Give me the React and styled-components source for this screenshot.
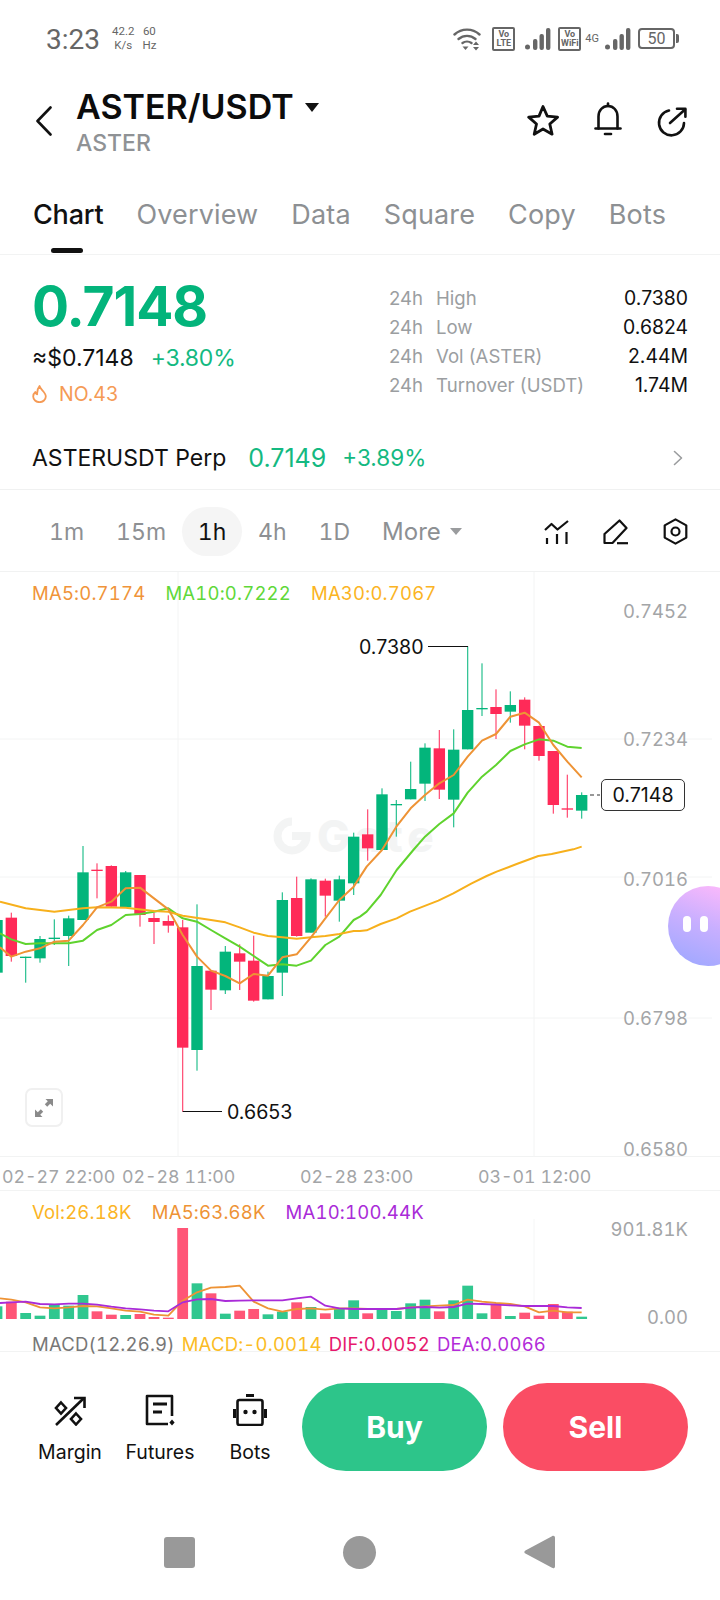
import styled, { createGlobalStyle } from "styled-components";

const GlobalStyle = createGlobalStyle`
  html, body { margin: 0; padding: 0; background: #fff; }
  body { font-family: Inter, "Liberation Sans", sans-serif; }
  * { box-sizing: border-box; }
`;

const Page = styled.div`
  position: relative;
  width: 720px;
  height: 1600px;
  overflow: hidden;
  background: #fff;
  display: flex;
  flex-direction: column;
`;

/* status bar */
const StatusBar = styled.div`
  height: 76px;
  padding: 26px 45px 0 46px;
  display: flex;
  align-items: flex-start;
  color: #666;
  font-family: Roboto, sans-serif;
`;
const Clock = styled.div`
  font-size: 28px;
  line-height: 28px;
  width: 66px;
`;
const NetStat = styled.div`
  font-size: 11.5px;
  line-height: 14px;
  text-align: center;
  margin-right: 8px;
  margin-top: -2px;
`;
const StatusRight = styled.div`
  margin-left: auto;
  display: flex;
  align-items: center;
  height: 25px;
`;
const VoBox = styled.div`
  width: 23px;
  height: 24px;
  border: 2px solid #666;
  border-radius: 2px;
  font-size: 9px;
  line-height: 9px;
  font-weight: 700;
  text-align: center;
  padding-top: 1px;
  margin: ${(p) => p.$margin};
`;
const FourG = styled.span`
  font-size: 11px;
  margin: 0 6px 0 4px;
`;
const Battery = styled.div`
  width: 37px;
  height: 21px;
  margin-left: 7px;
  border: 2px solid #666;
  border-radius: 4px;
  font-size: 16px;
  line-height: 17px;
  text-align: center;
  position: relative;
  &::after {
    content: "";
    position: absolute;
    right: -6px;
    top: 4px;
    width: 3px;
    height: 9px;
    background: #666;
    border-radius: 0 2px 2px 0;
  }
`;

/* pair header */
const Header = styled.div`
  height: 114px;
  padding: 16px 33px 0 36px;
  display: flex;
  align-items: flex-start;
`;
const BackWrap = styled.div`
  width: 40px;
  padding-top: 14px;
  display: flex;
`;
const PairCol = styled.div`
  display: flex;
  flex-direction: column;
`;
const PairRow = styled.div`
  display: flex;
  align-items: center;
  gap: 11px;
`;
const PairName = styled.div`
  font-size: 34px;
  line-height: 30px;
  font-weight: 600;
  color: #0c0c0c;
`;
const Caret = styled.div`
  width: 0;
  height: 0;
  border-left: ${(p) => p.$size}px solid transparent;
  border-right: ${(p) => p.$size}px solid transparent;
  border-top: ${(p) => p.$size * 1.3}px solid ${(p) => p.$color};
`;
const BaseName = styled.div`
  font-size: 23px;
  line-height: 26px;
  font-weight: 500;
  color: #8f9295;
  margin-top: 8px;
`;
const HeaderIcons = styled.div`
  margin-left: auto;
  display: flex;
  gap: 34px;
  padding-top: 12px;
`;

/* tabs */
const Tabs = styled.div`
  height: 65px;
  padding: 5px 0 0 33px;
  display: flex;
  gap: 33px;
  border-bottom: 1px solid #f2f3f3;
`;
const Tab = styled.div`
  position: relative;
  font-size: 27px;
  line-height: 40px;
  letter-spacing: ${(p) => (p.$active ? "-0.2px" : "0.15px")};
  color: ${(p) => (p.$active ? "#111" : "#8d9093")};
  font-weight: ${(p) => (p.$active ? 500 : 400)};
  &::after {
    content: "";
    display: ${(p) => (p.$active ? "block" : "none")};
    position: absolute;
    left: 18px;
    top: 53px;
    width: 32px;
    height: 5px;
    border-radius: 3px;
    background: #111;
  }
`;

/* price summary */
const Summary = styled.div`
  height: 171px;
  padding: 22px 32px 0 32px;
  display: flex;
  justify-content: space-between;
`;
const PriceCol = styled.div`
  display: flex;
  flex-direction: column;
`;
const BigPrice = styled.div`
  font-size: 55px;
  line-height: 58px;
  font-weight: 700;
  letter-spacing: -1px;
  color: #03b47b;
`;
const FiatRow = styled.div`
  margin-top: 9px;
  display: flex;
  gap: 17px;
  font-size: 23px;
  line-height: 28px;
  color: #111;
`;
const Up = styled.span`
  color: #14b981;
  letter-spacing: -0.2px;
`;
const RankRow = styled.div`
  margin-top: 10px;
  display: flex;
  align-items: center;
  gap: 12px;
  font-size: 19.5px;
  line-height: 24px;
  color: #f59a55;
`;
const StatsCol = styled.div`
  width: 299px;
  padding-top: 9px;
  display: flex;
  flex-direction: column;
  gap: 5px;
`;
const StatRow = styled.div`
  display: flex;
  font-size: 18.6px;
  line-height: 24px;
  color: #9b9ea1;
`;
const StatPeriod = styled.span`
  width: 47px;
`;
const StatValue = styled.span`
  margin-left: auto;
  font-size: 19.4px;
  color: #111;
`;

const PerpRow = styled.div`
  height: 64px;
  padding: 0 37px 0 32px;
  display: flex;
  align-items: center;
  font-size: 23px;
  color: #111;
  border-bottom: 1px solid #f0f1f1;
`;
const PerpPrice = styled.span`
  margin-left: 22px;
  font-size: 25px;
  color: #14b981;
`;
const PerpChange = styled.span`
  margin-left: 16px;
  font-size: 22.5px;
  color: #14b981;
`;
const PushRight = styled.div`
  margin-left: auto;
  display: flex;
`;

/* period toolbar */
const Periods = styled.div`
  height: 82px;
  padding: 2px 32px 0 33px;
  display: flex;
  align-items: center;
  border-bottom: 1px solid #f1f2f2;
`;
const Period = styled.div`
  height: 49px;
  min-width: ${(p) => (p.$active ? "60px" : "auto")};
  padding: 0 ${(p) => (p.$active ? "0" : "16px")};
  border-radius: 25px;
  background: ${(p) => (p.$active ? "#f5f5f5" : "transparent")};
  color: ${(p) => (p.$active ? "#111" : "#8d9093")};
  font-size: 23px;
  font-variant-numeric: tabular-nums;
  display: flex;
  align-items: center;
  justify-content: center;
  gap: 9px;
`;
const MorePeriod = styled(Period)`
  font-size: 24px;
`;
const ToolIcons = styled.div`
  margin-left: auto;
  display: flex;
  gap: 34px;
  align-items: center;
`;

/* chart */
const ChartArea = styled.div`
  position: relative;
  height: 585px;
  border-bottom: 1px solid #f2f3f3;
`;
const Legend = styled.div`
  position: relative;
  z-index: 1;
  padding-left: 32px;
  display: flex;
  gap: 20px;
  font-size: 18.5px;
  line-height: 22px;
  letter-spacing: 0.2px;
  font-variant-numeric: tabular-nums;
  padding-top: ${(p) => p.$top}px;
`;
const LegendItem = styled.span`
  color: ${(p) => p.$color};
`;
const Canvas = styled.svg`
  position: absolute;
  left: 0;
  top: 0;
  display: block;
`;
const AxisLabel = styled.div`
  position: absolute;
  right: 32px;
  top: ${(p) => p.$top}px;
  font-size: 18.5px;
  line-height: 22px;
  color: #a3a5a7;
  font-variant-numeric: tabular-nums;
`;
const PriceNote = styled.div`
  position: absolute;
  left: ${(p) => p.$left}px;
  top: ${(p) => p.$top}px;
  font-size: 19.6px;
  line-height: 22px;
  color: #111;
`;
const LastTag = styled.div`
  position: absolute;
  left: 601px;
  top: 207px;
  width: 84px;
  height: 32px;
  border: 1px solid #333;
  border-radius: 5px;
  background: #fff;
  font-size: 19.6px;
  line-height: 30px;
  text-align: center;
  color: #111;
`;
const Watermark = styled.div`
  position: absolute;
  left: 273px;
  top: 242px;
  display: flex;
  align-items: center;
  gap: 6px;
  font-size: 44px;
  line-height: 44px;
  font-weight: 800;
  letter-spacing: 5px;
  color: #f3f4f4;
`;
const ExpandButton = styled.div`
  position: absolute;
  left: 25px;
  top: 516px;
  width: 38px;
  height: 39px;
  border: 2px solid #f0f0f0;
  border-radius: 7px;
  display: flex;
  align-items: center;
  justify-content: center;
`;
const AiBubble = styled.div`
  position: absolute;
  left: 668px;
  top: 314px;
  width: 80px;
  height: 80px;
  border-radius: 50%;
  background: linear-gradient(200deg, #fcb9fb 8%, #c8afff 50%, #a5a9ff 88%);
  z-index: 2;
  display: flex;
  gap: 9px;
  padding: 30px 0 0 15px;
`;
const Eye = styled.div`
  width: 8px;
  height: 16px;
  border-radius: 4px;
  background: #fff;
`;

const TimeAxis = styled.div`
  position: relative;
  height: 34px;
  border-bottom: 1px solid #f2f3f3;
`;
const TimeLabel = styled.div`
  position: absolute;
  left: ${(p) => p.$left}px;
  top: 9px;
  font-size: 17.8px;
  line-height: 22px;
  color: #a3a5a7;
  white-space: nowrap;
  font-variant-numeric: tabular-nums;
`;

const VolumePane = styled.div`
  position: relative;
  height: 161px;
  border-bottom: 1px solid #f2f3f3;
`;
const MacdLegend = styled.div`
  position: absolute;
  left: 32px;
  top: 144px;
  display: flex;
  gap: 7px;
  font-size: 18.5px;
  line-height: 18px;
  letter-spacing: 0.2px;
  font-variant-numeric: tabular-nums;
`;

/* bottom actions */
const ActionBar = styled.div`
  height: 120px;
  padding: 31px 32px 0 25px;
  display: flex;
  align-items: flex-start;
`;
const QuickLinks = styled.div`
  width: 277px;
  padding: 11px 7px 0 0;
  display: grid;
  grid-template-columns: repeat(3, 90px);
`;
const QuickLink = styled.div`
  display: flex;
  flex-direction: column;
  align-items: center;
  gap: 14px;
  font-size: 19.5px;
  line-height: 24px;
  color: #111;
`;
const IconSlot = styled.div`
  height: 32px;
  display: flex;
  align-items: flex-end;
`;
const TradeButton = styled.div`
  width: 185px;
  height: 88px;
  border-radius: 44px;
  margin-right: 16px;
  background: ${(p) => p.$color};
  color: #fff;
  font-size: 30px;
  font-weight: 700;
  display: flex;
  align-items: center;
  justify-content: center;
  &:last-child {
    margin-right: 0;
  }
`;

const NavBar = styled.div`
  padding: 63px 0 0 164px;
  display: flex;
  align-items: center;
  gap: 148px;
`;
const NavSquare = styled.div`
  width: 31px;
  height: 31px;
  border-radius: 3px;
  background: #999;
`;
const NavCircle = styled.div`
  width: 33px;
  height: 33px;
  border-radius: 50%;
  background: #999;
`;

/* traced off the reference at 3x: [x, wickTop, wickBottom, bodyTop, bodyBottom, up] */
const leftCandles = [
  [-9, 210, 368, 210, 368, 1], [34, 188, 335, 203, 318, 0], [77, 320, 398, 320, 324, 1],
  [120, 258, 338, 267, 325, 1], [163, 208, 285, 263, 267, 1], [206, 197, 348, 205, 258, 1],
  [249, -12, 210, 67, 210, 1], [291, 40, 145, 59, 63, 0], [334, 46, 170, 48, 170, 0],
  [377, 63, 170, 67, 172, 1], [420, 75, 230, 75, 195, 0], [462, 188, 282, 204, 216, 0],
  [505, 196, 248, 213, 227, 0], [548, 210, 785, 232, 593, 0], [591, 163, 662, 348, 600, 1],
  [633, 362, 480, 362, 419, 0], [676, 288, 432, 305, 421, 1], [719, 283, 420, 310, 335, 0],
  [761, 257, 455, 332, 452, 0], [804, 365, 448, 378, 448, 1], [847, 127, 438, 150, 368, 1],
  [890, 80, 260, 144, 258, 0], [933, 85, 248, 88, 248, 1], [976, 86, 200, 92, 137, 0],
  [1018, 77, 215, 88, 152, 1], [1061, -52, 135, -40, 100, 1],
];
const rightCandles = [
  [23, 718, 872, 793, 835, 0], [66, 655, 840, 673, 840, 1], [109, 690, 800, 702, 706, 1],
  [152, 575, 688, 657, 688, 1], [195, 520, 693, 533, 641, 1], [238, 480, 687, 535, 659, 0],
  [281, 478, 772, 539, 689, 1], [323, 229, 538, 420, 538, 1], [366, 280, 438, 414, 418, 1],
  [408, 358, 507, 411, 432, 0], [451, 364, 458, 405, 425, 1], [494, 382, 538, 389, 467, 0],
  [537, 467, 572, 468, 558, 0], [580, 543, 731, 543, 705, 0], [622, 614, 743, 715, 719, 0],
  [665, 667, 746, 675, 722, 1],
];

const ma5 = [
  [[0, 292], [34, 320], [77, 305], [120, 295], [163, 275], [206, 272], [249, 225], [291, 172], [334, 155], [377, 115], [420, 113], [462, 145], [505, 178], [548, 255], [591, 320], [633, 362], [676, 378], [719, 400], [761, 372], [804, 377], [847, 322], [890, 313], [933, 262], [976, 205], [1018, 150], [1061, 110]],
  [[20, 890], [66, 840], [109, 770], [152, 715], [195, 675], [238, 640], [281, 615], [323, 560], [366, 512], [408, 492], [451, 440], [494, 428], [537, 458], [580, 525], [622, 575], [665, 622]],
];
const ma10 = [
  [[0, 250], [34, 268], [77, 282], [120, 280], [163, 280], [206, 280], [249, 272], [291, 240], [334, 225], [377, 195], [420, 192], [462, 185], [505, 175], [548, 205], [591, 215], [633, 240], [676, 265], [719, 290], [761, 318], [804, 347], [847, 343], [890, 347], [933, 332], [976, 285], [1018, 260], [1061, 210]],
  [[0, 1040], [20, 1025], [62, 975], [110, 900], [160, 840], [195, 800], [238, 762], [281, 730], [323, 668], [366, 620], [408, 585], [451, 543], [494, 523], [537, 508], [580, 512], [622, 530], [665, 534]],
];
const ma30 = [
  [[0, 155], [77, 175], [163, 185], [249, 175], [291, 172], [377, 173], [462, 183], [505, 185], [548, 197], [633, 210], [676, 217], [719, 232], [761, 248], [804, 258], [847, 262], [890, 266], [933, 262], [976, 258], [1018, 252], [1061, 243]],
  [[0, 1083], [20, 1081], [62, 1062], [110, 1045], [150, 1025], [235, 992], [280, 970], [335, 940], [380, 918], [410, 905], [470, 882], [535, 858], [575, 852], [640, 838], [665, 830]],
];

/* [x, top, up] on the volume pane, baseline is 450 */
const leftBars = [
  [-9, 412, 1], [34, 398, 0], [77, 432, 1], [120, 440, 1], [163, 408, 1], [206, 410, 1], [249, 378, 1],
  [291, 427, 0], [334, 437, 0], [377, 438, 1], [420, 435, 0], [462, 444, 0], [505, 446, 0], [548, 177, 0],
  [591, 343, 1], [633, 373, 0], [676, 434, 1], [719, 425, 0], [761, 420, 0], [804, 436, 1], [847, 428, 1],
  [890, 400, 0], [933, 414, 1], [976, 433, 0], [1018, 420, 1], [1061, 394, 1],
];
const rightBars = [
  [23, 433, 0], [66, 420, 1], [109, 426, 1], [152, 403, 1], [195, 392, 1], [238, 427, 0], [281, 394, 1],
  [323, 350, 1], [366, 433, 1], [408, 408, 0], [451, 441, 1], [494, 431, 0], [537, 440, 0], [580, 405, 0],
  [622, 428, 0], [665, 443, 1],
];
const volMa5 = [
  [[0, 388], [34, 392], [77, 400], [120, 415], [163, 418], [206, 415], [249, 411], [291, 412], [334, 418], [377, 425], [420, 428], [462, 437], [505, 440], [548, 395], [591, 370], [633, 356], [676, 354], [719, 350], [761, 398], [804, 418], [847, 428], [890, 420], [933, 418], [976, 422], [1018, 418], [1061, 418]],
  [[23, 420], [109, 420], [152, 415], [195, 412], [238, 410], [281, 408], [323, 392], [366, 398], [408, 402], [451, 405], [494, 412], [537, 430], [580, 425], [622, 430], [665, 430]],
];
const volMa10 = [
  [[0, 402], [34, 400], [77, 398], [120, 405], [163, 406], [206, 404], [249, 404], [291, 407], [334, 413], [377, 418], [420, 421], [462, 425], [505, 427], [548, 400], [591, 391], [633, 390], [676, 396], [719, 395], [761, 394], [804, 394], [847, 394], [890, 388], [933, 383], [976, 410], [1018, 418], [1061, 420]],
  [[23, 420], [66, 420], [109, 420], [152, 416], [195, 414], [238, 416], [281, 414], [323, 404], [366, 405], [408, 407], [451, 409], [494, 411], [537, 411], [580, 411], [622, 415], [665, 417]],
];

const GREEN = "#03b57b";
const RED = "#ff2a58";

const mainLine = ([a, b]) =>
  [...a.map(([x, y]) => `${x / 3},${850 + y / 3}`), ...b.map(([x, y]) => `${360 + x / 3},${570 + y / 3}`)].join(" ");
const volLine = ([a, b]) =>
  [...a.map(([x, y]) => `${x / 3},${1170 + y / 3}`), ...b.map(([x, y]) => `${360 + x / 3},${1170 + y / 3}`)].join(" ");

const Candle = ({ x, wickTop, wickBottom, bodyTop, bodyBottom, up }) => {
  const color = up ? GREEN : RED;
  return (
    <g>
      <rect x={x - 0.6} y={wickTop} width={1.2} height={wickBottom - wickTop} fill={color} opacity={0.85} />
      <rect x={x - 5.7} y={bodyTop} width={11.4} height={Math.max(bodyBottom - bodyTop, 1.3)} fill={color} />
    </g>
  );
};

const candles = [
  ...leftCandles.map(([x, a, b, c, d, up]) => ({ x: x / 3, a: 850 + a / 3, b: 850 + b / 3, c: 850 + c / 3, d: 850 + d / 3, up })),
  ...rightCandles.map(([x, a, b, c, d, up]) => ({ x: 360 + x / 3, a: 570 + a / 3, b: 570 + b / 3, c: 570 + c / 3, d: 570 + d / 3, up })),
];
const bars = [
  ...leftBars.map(([x, top, up]) => ({ x: x / 3, top: 1170 + top / 3, up })),
  ...rightBars.map(([x, top, up]) => ({ x: 360 + x / 3, top: 1170 + top / 3, up })),
];

const WifiIcon = () => (
  <svg width="28" height="24" viewBox="0 0 28 24" fill="none" stroke="#666" strokeWidth="2.4" strokeLinecap="round">
    <path d="M1.5 7.5C8.5 1 19.5 1 26.5 7.5" />
    <path d="M5.5 12C10.5 7.8 17.5 7.8 22.5 12" />
    <path d="M9.5 16C12 14.2 16 14.2 18.5 16" />
    <path d="M9.5 19.5h6l-3 3.5z" fill="#666" stroke="none" />
    <path d="M20 18l3-3.5 3 3.5zM20 20l3 3.5 3-3.5z" fill="#666" stroke="none" />
  </svg>
);

const SignalIcon = () => (
  <svg width="26" height="22" viewBox="0 0 26 22" fill="#666">
    <circle cx="2.5" cy="19" r="2.5" />
    <rect x="8" y="11" width="4.4" height="11" rx="2" />
    <rect x="14.5" y="6" width="4.4" height="16" rx="2" />
    <rect x="21" y="0" width="4.4" height="22" rx="2" />
  </svg>
);

const BackIcon = () => (
  <svg width="16" height="30" viewBox="0 0 16 30" fill="none" stroke="#111" strokeWidth="2.6" strokeLinecap="round" strokeLinejoin="round">
    <path d="M14.5 1.5L1.5 15l13 13.5" />
  </svg>
);
const StarIcon = () => (
  <svg width="34" height="32" viewBox="0 0 34 32" fill="none" stroke="#111" strokeWidth="2.8" strokeLinejoin="round">
    <path d="M17 2.5l4.3 9.6 10.3 1-7.8 6.9 2.3 10.2L17 25l-8.8 5.2 2.3-10.2-7.8-6.9 10.3-1z" />
  </svg>
);
const BellIcon = () => (
  <svg width="28" height="34" viewBox="0 0 28 34" fill="none" stroke="#111" strokeWidth="2.6" strokeLinecap="round" style={{ marginTop: -2 }}>
    <path d="M14 1.5v2.5" />
    <path d="M4.5 26.5V14.5C4.5 8.5 8.5 4 14 4s9.5 4.5 9.5 10.5v12" />
    <path d="M1.5 26.5h25" />
    <path d="M11 32h6" />
  </svg>
);
const ShareIcon = () => (
  <svg width="31" height="30" viewBox="0 0 31 30" fill="none" stroke="#111" strokeWidth="2.6" strokeLinecap="round" strokeLinejoin="round" style={{ marginTop: 3 }}>
    <path d="M13 3.6A12.5 12.5 0 1 0 28 16" />
    <path d="M14 16L29 2.5" />
    <path d="M21 1.8h8.4v8" />
  </svg>
);
const FlameIcon = () => (
  <svg width="15" height="18" viewBox="0 0 15 18" fill="none" stroke="#f59a55" strokeWidth="1.8" strokeLinejoin="round">
    <path d="M7.5 1C8 4.5 13.8 7 13.8 11.5A6.3 5.7 0 0 1 1.2 11.5C1.2 9.5 2.2 8 3.4 7c.3 1.3.9 2 1.8 2.3C5 6 5.8 3 7.5 1z" />
  </svg>
);
const ChevronIcon = () => (
  <svg width="10" height="16" viewBox="0 0 10 16" fill="none" stroke="#9a9c9e" strokeWidth="1.6" strokeLinecap="round" strokeLinejoin="round">
    <path d="M1.5 1.5L8.5 8l-7 6.5" />
  </svg>
);
const IndicatorIcon = () => (
  <svg width="25" height="24" viewBox="0 0 25 24" fill="none" stroke="#111" strokeWidth="2.2" strokeLinejoin="round">
    <path d="M1 10l6.5-6 6 5.5L24 1" />
    <path d="M3 18v6M13 14v10M22.5 12v12" />
  </svg>
);
const PenIcon = () => (
  <svg width="26" height="26" viewBox="0 0 26 26" fill="none" stroke="#111" strokeWidth="2.2" strokeLinejoin="round">
    <path d="M16.5 1.5l7 7.5L9.5 24H1.5v-9z" />
    <path d="M14 24.2h11" />
  </svg>
);
const HexIcon = () => (
  <svg width="25" height="27" viewBox="0 0 25 27" fill="none" stroke="#111" strokeWidth="2.2" strokeLinejoin="round">
    <path d="M12.5 1.4l10.8 6v12.2l-10.8 6-10.8-6V7.4z" />
    <circle cx="12.5" cy="13.5" r="4" />
  </svg>
);
const GateMark = () => (
  <svg width="38" height="38" viewBox="0 0 38 38" fill="none" stroke="#f3f4f4" strokeWidth="8">
    <path d="M19 4.5A14.5 14.5 0 1 0 33.5 19H19" />
  </svg>
);
const ExpandIcon = () => (
  <svg width="20" height="20" viewBox="0 0 20 20" fill="#8a8a8a">
    <path d="M11.5 1H19v7.5l-2.8-2.8-3 3-2.4-2.4 3-3zM8.5 19H1v-7.5l2.8 2.8 3-3 2.4 2.4-3 3z" />
  </svg>
);
const MarginIcon = () => (
  <svg width="32" height="30" viewBox="0 0 32 30" fill="none" stroke="#111" strokeWidth="2.6" strokeLinejoin="miter">
    <path d="M7 6.5l5 5.5-5 5.5-5-5.5zM22 17.5l5 5.5-5 5.5-5-5.5z" />
    <path d="M2 29L30 2" />
    <path d="M20 2h10.5v10" />
  </svg>
);
const FuturesIcon = () => (
  <svg width="30" height="32" viewBox="0 0 30 32" fill="none" stroke="#111" strokeWidth="2.6">
    <path d="M23 30H2V2h25v20" strokeLinejoin="round" />
    <path d="M8 10h14M8 18h9" strokeWidth="3" />
    <path d="M27 25.5l2.6 3-2.6 3-2.6-3z" fill="#111" stroke="none" />
  </svg>
);
const BotsIcon = () => (
  <svg width="34" height="32" viewBox="0 0 34 32" fill="#111">
    <rect x="13" y="0" width="8" height="3" />
    <rect x="4.5" y="6" width="25" height="25" rx="2" fill="none" stroke="#111" strokeWidth="2.6" />
    <rect x="0" y="15" width="3" height="9" />
    <rect x="31" y="15" width="3" height="9" />
    <circle cx="12.5" cy="18" r="2.2" />
    <circle cx="21.5" cy="18" r="2.2" />
  </svg>
);

const periods = ["1m", "15m", "1h", "4h", "1D"];
const tabs = ["Chart", "Overview", "Data", "Square", "Copy", "Bots"];
const stats = [
  ["High", "0.7380"],
  ["Low", "0.6824"],
  ["Vol (ASTER)", "2.44M"],
  ["Turnover (USDT)", "1.74M"],
];
const axisPrices = [
  ["0.7452", 28],
  ["0.7234", 156],
  ["0.7016", 296],
  ["0.6798", 435],
  ["0.6580", 566],
];
const timeLabels = [
  ["02-27 22:00", 2],
  ["02-28 11:00", 122],
  ["02-28 23:00", 300],
  ["03-01 12:00", 478],
];

const App = () => {
  return (
    <Page>
      <GlobalStyle />
      <StatusBar>
        <Clock>3:23</Clock>
        <NetStat>42.2<br />K/s</NetStat>
        <NetStat>60<br />Hz</NetStat>
        <StatusRight>
          <WifiIcon />
          <VoBox $margin="0 10px 0 11px">Vo<br />LTE</VoBox>
          <SignalIcon />
          <VoBox $margin="0 0 0 7px">Vo<br />WiFi</VoBox>
          <FourG>4G</FourG>
          <SignalIcon />
          <Battery>50</Battery>
        </StatusRight>
      </StatusBar>

      <Header>
        <BackWrap><BackIcon /></BackWrap>
        <PairCol>
          <PairRow>
            <PairName>ASTER/USDT</PairName>
            <Caret $size={7} $color="#111" />
          </PairRow>
          <BaseName>ASTER</BaseName>
        </PairCol>
        <HeaderIcons>
          <StarIcon />
          <BellIcon />
          <ShareIcon />
        </HeaderIcons>
      </Header>

      <Tabs>
        {tabs.map((t, i) => (
          <Tab key={t} $active={i === 0}>{t}</Tab>
        ))}
      </Tabs>

      <Summary>
        <PriceCol>
          <BigPrice>0.7148</BigPrice>
          <FiatRow>
            <span>≈$0.7148</span>
            <Up>+3.80%</Up>
          </FiatRow>
          <RankRow>
            <FlameIcon />
            NO.43
          </RankRow>
        </PriceCol>
        <StatsCol>
          {stats.map(([label, value]) => (
            <StatRow key={label}>
              <StatPeriod>24h</StatPeriod>
              {label}
              <StatValue>{value}</StatValue>
            </StatRow>
          ))}
        </StatsCol>
      </Summary>

      <PerpRow>
        ASTERUSDT Perp
        <PerpPrice>0.7149</PerpPrice>
        <PerpChange>+3.89%</PerpChange>
        <PushRight><ChevronIcon /></PushRight>
      </PerpRow>

      <Periods>
        {periods.map((p) => (
          <Period key={p} $active={p === "1h"}>{p}</Period>
        ))}
        <MorePeriod>
          More
          <Caret $size={6} $color="#9a9c9e" />
        </MorePeriod>
        <ToolIcons>
          <IndicatorIcon />
          <PenIcon />
          <HexIcon />
        </ToolIcons>
      </Periods>

      <ChartArea>
        <Watermark>
          <GateMark />
          Gate
        </Watermark>
        <Canvas width="720" height="585" viewBox="0 572 720 585">
          <g stroke="#f3f4f4" strokeWidth="1">
            <path d="M178 572V1157M534 572V1157" />
            <path d="M0 739H712M0 877H712M0 1018H712" />
          </g>
          {candles.map((c) => (
            <Candle key={c.x} x={c.x} wickTop={c.a} wickBottom={c.b} bodyTop={c.c} bodyBottom={c.d} up={c.up} />
          ))}
          <polyline points={mainLine(ma10)} fill="none" stroke="#5fd32e" strokeWidth="2" strokeLinejoin="round" />
          <polyline points={mainLine(ma30)} fill="none" stroke="#f7b01c" strokeWidth="2" strokeLinejoin="round" />
          <polyline points={mainLine(ma5)} fill="none" stroke="#ee9335" strokeWidth="2" strokeLinejoin="round" />
          <path d="M428 646.5H468" stroke="#111" strokeWidth="1.2" fill="none" />
          <path d="M182.7 1111.5H222" stroke="#111" strokeWidth="1.2" fill="none" />
          <path d="M590 795H600" stroke="#333" strokeWidth="1.2" strokeDasharray="4 3" fill="none" />
        </Canvas>
        <Legend $top={10}>
          <LegendItem $color="#f0943a">MA5:0.7174</LegendItem>
          <LegendItem $color="#5fd839">MA10:0.7222</LegendItem>
          <LegendItem $color="#fbb424">MA30:0.7067</LegendItem>
        </Legend>
        {axisPrices.map(([price, top]) => (
          <AxisLabel key={price} $top={top}>{price}</AxisLabel>
        ))}
        <PriceNote $left={359} $top={64}>0.7380</PriceNote>
        <PriceNote $left={227} $top={529}>0.6653</PriceNote>
        <LastTag>0.7148</LastTag>
        <ExpandButton><ExpandIcon /></ExpandButton>
        <AiBubble>
          <Eye />
          <Eye />
        </AiBubble>
      </ChartArea>

      <TimeAxis>
        {timeLabels.map(([label, left]) => (
          <TimeLabel key={label} $left={left}>{label}</TimeLabel>
        ))}
      </TimeAxis>

      <VolumePane>
        <Canvas width="720" height="161" viewBox="0 1192 720 161">
          <path d="M534 1220V1320" stroke="#f5f6f6" strokeWidth="1" fill="none" />
          {bars.map((b) => (
            <rect key={b.x} x={b.x - 5.4} y={b.top} width={10.8} height={1320 - b.top} fill={b.up ? "#30c78f" : "#ff5577"} />
          ))}
          <polyline points={volLine(volMa5)} fill="none" stroke="#ee9335" strokeWidth="1.8" strokeLinejoin="round" />
          <polyline points={volLine(volMa10)} fill="none" stroke="#a92bd8" strokeWidth="1.8" strokeLinejoin="round" />
        </Canvas>
        <Legend $top={10}>
          <LegendItem $color="#fbb424">Vol:26.18K</LegendItem>
          <LegendItem $color="#ee9335">MA5:63.68K</LegendItem>
          <LegendItem $color="#a92bd8">MA10:100.44K</LegendItem>
        </Legend>
        <AxisLabel $top={27}>901.81K</AxisLabel>
        <AxisLabel $top={115}>0.00</AxisLabel>
        <MacdLegend>
          <LegendItem $color="#777">MACD(12.26.9)</LegendItem>
          <LegendItem $color="#fbbc24">MACD:-0.0014</LegendItem>
          <LegendItem $color="#e6176d">DIF:0.0052</LegendItem>
          <LegendItem $color="#b32bd9">DEA:0.0066</LegendItem>
        </MacdLegend>
      </VolumePane>

      <ActionBar>
        <QuickLinks>
          <QuickLink><IconSlot><MarginIcon /></IconSlot>Margin</QuickLink>
          <QuickLink><IconSlot><FuturesIcon /></IconSlot>Futures</QuickLink>
          <QuickLink><IconSlot><BotsIcon /></IconSlot>Bots</QuickLink>
        </QuickLinks>
        <TradeButton $color="#2dc58a">Buy</TradeButton>
        <TradeButton $color="#fa4d64">Sell</TradeButton>
      </ActionBar>

      <NavBar>
        <NavSquare />
        <NavCircle />
        <svg width="31" height="34" viewBox="0 0 31 34" fill="#999">
          <path d="M28 1.2c1.6-1 3-.2 3 1.6v28.4c0 1.8-1.4 2.6-3 1.6L1.4 18.6c-1.4-.9-1.4-2.3 0-3.2z" />
        </svg>
      </NavBar>
    </Page>
  );
};

export default App;
